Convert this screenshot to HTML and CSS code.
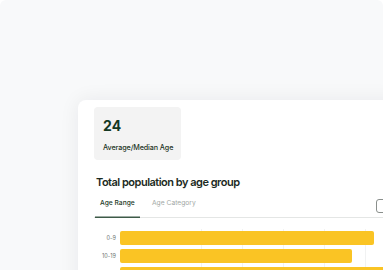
FILE: index.html
```html
<!DOCTYPE html>
<html>
<head>
<meta charset="utf-8">
<link rel="stylesheet" href="styles.css">
</head>
<body>
<div class="frame">
  <div class="card">
    <div class="stat">
      <div class="stat-value">24</div>
      <div class="stat-label">Average/Median Age</div>
    </div>
    <h2 class="title">Total population by age group</h2>
    <div class="tabs-row">
      <div class="tabs">
        <div class="tab active">Age Range</div>
        <div class="tab">Age Category</div>
      </div>
      <div class="tab-btn"></div>
    </div>
    <div class="chart">
      <div class="grid">
        <span></span><span></span><span></span><span></span><span></span><span></span><span></span>
      </div>
      <div class="row"><div class="label">0-9</div><div class="bar" style="width:254px"></div></div>
      <div class="row"><div class="label">10-19</div><div class="bar" style="width:232px"></div></div>
      <div class="row"><div class="label">20-29</div><div class="bar" style="width:270px"></div></div>
    </div>
  </div>
</div>
</body>
</html>
```

FILE: styles.css
```css
* { box-sizing: border-box; }
html, body { margin: 0; padding: 0; background: #ffffff; }
body { font-family: Inter, "Noto Sans", sans-serif; width: 383px; height: 270px; overflow: hidden; }
.frame {
  width: 383px;
  height: 270px;
  background: #f8f9fa;
  border-radius: 6px 6px 0 0;
  padding: 100px 0 0 78px;
  overflow: hidden;
}
.card {
  width: 330px;
  height: 200px;
  background: #ffffff;
  border-radius: 8px;
  box-shadow: 0 0 20px rgba(20, 30, 40, 0.07);
  padding: 7px 0 0 16px;
}
.stat {
  width: 87px;
  height: 53px;
  background: #f3f3f3;
  border-radius: 4px;
  padding: 11px 0 0 9px;
  color: #143823;
}
.stat-value { font-size: 14px; font-weight: 700; line-height: 16px; letter-spacing: 0.2px; }
.stat-label { font-size: 7.2px; font-weight: 500; margin-top: 9px; line-height: 9px; color: #1d3325; letter-spacing: -0.1px; white-space: nowrap; }
.title {
  margin: 14px 0 0 2px;
  font-size: 11px;
  font-weight: 600;
  line-height: 16px;
  color: #1b2a22;
  letter-spacing: -0.5px;
}
.tabs-row {
  display: flex;
  align-items: flex-end;
  margin-top: 4px;
  width: 297px;
  position: relative;
}
.tabs {
  display: flex;
  flex: 1;
  border-bottom: 1px solid #e4e6e5;
}
.tab {
  font-size: 6.7px;
  color: #a2a8a5;
  padding: 5px 0 9px 0;
  line-height: 9px;
  white-space: nowrap;
  margin-left: 12px;
}
.tab.active {
  color: #1d3a28;
  font-weight: 500;
  box-shadow: inset 0 -1.5px 0 #3d5a48;
  margin-bottom: -1px;
  margin-left: 1px;
  width: 45px;
  padding-left: 5px;
  padding-bottom: 10px;
}
.tab-btn {
  position: absolute;
  left: 282px;
  top: 5px;
  width: 14px;
  height: 14px;
  border: 1px solid #8a8f8c;
  border-radius: 3px;
}
.chart { position: relative; margin-top: 11px; }
.grid { position: absolute; left: 67px; top: 0; height: 60px; display: flex; }
.grid span { width: 41px; border-right: 1px solid #f1f2f2; height: 60px; }
.row { display: flex; align-items: center; height: 18px; position: relative; }
.label {
  width: 22px;
  text-align: right;
  font-size: 5.5px;
  color: #6d7470;
  margin-right: 4px;
}
.bar {
  height: 14px;
  background: #fac424;
  border-radius: 2px;
}
```
